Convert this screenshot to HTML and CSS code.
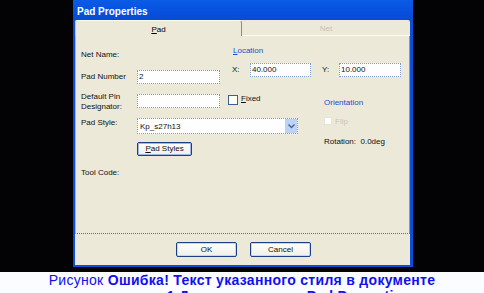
FILE: index.html
```html
<!DOCTYPE html>
<html>
<head>
<meta charset="utf-8">
<link rel="stylesheet" href="styles.css">
</head>
<body>
<div class="screen">
  <div class="dialog">
    <div class="titlebar">Pad Properties</div>
    <div class="body">
      <div class="tabs">
        <div class="tab sel"><u>P</u>ad</div>
        <div class="tab off">Net</div>
      </div>
      <div class="panel">
        <div class="row r1">
          <div class="lbl w152 mt6">Net Name:</div>
          <div class="lbl blue mt2"><u>L</u>ocation</div>
        </div>
        <div class="row r2">
          <div class="lbl w56 mt9">Pad Number</div>
          <div class="field w83 mt7">2</div>
          <div class="lbl wx mt2">X:</div>
          <div class="field w61">40.000</div>
          <div class="lbl wy mt2">Y:</div>
          <div class="field w62">10.000</div>
        </div>
        <div class="row r3">
          <div class="lbl w56">Default Pin<br>Designator:</div>
          <div class="field w83 mt2"></div>
          <div class="check mt3"></div>
          <div class="lbl wfix mt2"><u>F</u>ixed</div>
          <div class="lbl blue mt6">Orientation</div>
        </div>
        <div class="row r4">
          <div class="lbl w56 mt1">Pad Style:</div>
          <div class="combo mt1"><span class="ctext">Kp_s27h13</span><span class="drop"><svg width="7" height="5" viewBox="0 0 7 5"><path d="M0.5 0.5 L3.5 3.5 L6.5 0.5" fill="none" stroke="#4d6185" stroke-width="1.4"/></svg></span></div>
          <div class="check dis"></div>
          <div class="lbl grey">Flip</div>
        </div>
        <div class="row r5">
          <div class="btn pstyles mt5"><u>P</u>ad Styles</div>
          <div class="lbl">Rotation:&nbsp; 0.0deg</div>
        </div>
        <div class="row r6">
          <div class="lbl">Tool Code:</div>
        </div>
      </div>
      <div class="footer">
        <div class="btn big ok">OK</div>
        <div class="btn big">Cancel</div>
      </div>
    </div>
  </div>
</div>
<div class="caption">Рисунок <b>Ошибка! Текст указанного стиля в документе отсутствует..1 Диалоговое окно Pad Properties</b></div>
</body>
</html>
```
FILE: styles.css
```css
html, body {
  margin: 0;
  padding: 0;
}
body {
  width: 484px;
  height: 293px;
  overflow: hidden;
  background: #000;
  font-family: "Liberation Sans", Arial, sans-serif;
}
.screen {
  height: 272px;
  background: #030306;
  display: flex;
}
.dialog {
  margin-left: 73px;
  width: 340px;
  height: 267px;
  background: #0a4fd8;
  display: flex;
  flex-direction: column;
}
.titlebar {
  height: 17px;
  padding: 3px 0 0 4px;
  line-height: 17px;
  font-size: 10px;
  font-weight: bold;
  color: #fff;
  background: linear-gradient(#0a5be6, #0650de 60%, #0a4ad2);
}
.body {
  flex: 1;
  margin: 0 3px 2px 2px;
  background: #ece9d8;
  display: flex;
  flex-direction: column;
  border-radius: 2px 2px 0 0;
}
.tabs {
  height: 16px;
  display: flex;
}
.tab {
  font-size: 8px;
  line-height: 10px;
  text-align: center;
  padding-top: 4px;
  box-sizing: border-box;
}
.tab.sel {
  width: 167px;
  border-top: 1px solid #fbfbf8;
  border-left: 1px solid #c8c5b8;
  border-right: 1px solid #8e8c80;
  border-radius: 3px 3px 0 0;
  color: #000;
}
.tab.off {
  flex: 1;
  color: #c4c2b6;
  border-bottom: 1px solid #fbfbf8;
}
.panel {
  flex: 1;
  border-left: 1px solid #b5b3a6;
  border-right: 1px solid #9a988c;
  border-bottom: 1px dotted #6e6c62;
  padding: 8px 0 0 5px;
  display: flex;
  flex-direction: column;
}
.row {
  display: flex;
  align-items: flex-start;
}
.r1 { height: 19px; }
.r2 { height: 29px; }
.r3 { height: 25px; }
.r4 { height: 20px; }
.r5 { height: 31px; padding-left: 56px; }
.r6 { height: 20px; }
.lbl {
  font-size: 8px;
  line-height: 10px;
  color: #111;
  white-space: nowrap;
}
.blue { color: #1a4fd0; }
.grey { color: #c8c6ba; margin-left: 3px; }
.mt1 { margin-top: 1px; }
.mt2 { margin-top: 2px; }
.mt3 { margin-top: 3px; }
.mt5 { margin-top: 5px; }
.mt6 { margin-top: 6px; }
.mt7 { margin-top: 7px; }
.mt9 { margin-top: 9px; }
.w152 { width: 152px; }
.w56 { width: 56px; }
.w83 { width: 83px; }
.w61 { width: 61px; }
.w62 { width: 62px; }
.wx { width: 18px; margin-left: 12px; }
.wy { width: 17px; margin-left: 11px; }
.wfix { width: 83px; margin-left: 3px; }
.field {
  height: 14px;
  box-sizing: border-box;
  background: #fefefe;
  border: 1px dotted #7f9dc9;
  font-size: 8px;
  line-height: 12px;
  padding-left: 1px;
  color: #111;
}
.check {
  width: 10px;
  height: 10px;
  box-sizing: border-box;
  background: #fbfbf9;
  border: 1px solid #3f5f8f;
  margin-left: 8px;
}
.check.dis {
  width: 8px;
  height: 8px;
  border-color: #e6e4dc;
  background: #fdfdfb;
  margin-left: 26px;
}
.combo {
  width: 161px;
  height: 16px;
  box-sizing: border-box;
  background: #fefefe;
  border: 1px dotted #7f9dc9;
  display: flex;
  align-items: center;
  font-size: 8px;
  color: #111;
}
.ctext {
  flex: 1;
  padding-left: 2px;
}
.drop {
  width: 12px;
  height: 14px;
  background: #bcd2f8;
  display: flex;
  align-items: center;
  justify-content: center;
}
.btn {
  box-sizing: border-box;
  border: 1px solid #1c3f86;
  border-radius: 2px;
  background: linear-gradient(#fefefe, #f0efe8);
  font-size: 8px;
  text-align: center;
  color: #111;
}
.pstyles {
  width: 55px;
  height: 14px;
  line-height: 12px;
  margin-right: 132px;
  box-shadow: inset 0 0 0 1px #9ab8ea;
}
.footer {
  height: 31px;
  display: flex;
  padding: 8px 0 0 101px;
  box-sizing: border-box;
  gap: 13px;
}
.big {
  width: 61px;
  height: 15px;
  line-height: 13px;
  box-shadow: inset 0 0 0 1px #c6d6f2;
}
.caption {
  height: 21px;
  background: #fbfcff;
  padding: 0 40px;
  font-size: 14px;
  letter-spacing: 0.3px;
  line-height: 16px;
  color: #1010f0;
  text-align: center;
  overflow: hidden;
}
.caption b {
  font-weight: bold;
}
```
